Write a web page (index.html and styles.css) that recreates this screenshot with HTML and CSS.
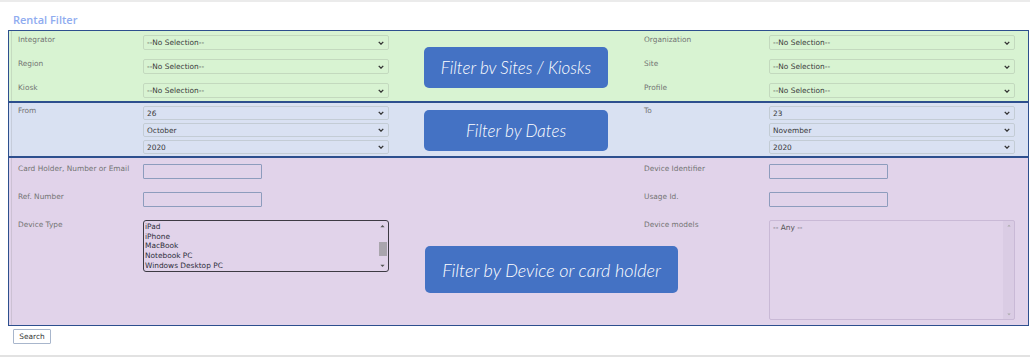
FILE: index.html
```html
<!DOCTYPE html>
<html>
<head>
<meta charset="utf-8">
<link rel="stylesheet" href="styles.css">
</head>
<body>
<div class="page">
  <h1 class="title">Rental Filter</h1>
  <div class="panel">
    <section class="sec sec-sites">
      <label class="lbl">Integrator</label>
      <div class="sel"><span>--No Selection--</span><svg class="chev" viewBox="0 0 8 5"><path d="M1 1 L4 4 L7 1" /></svg></div>
      <div class="spacer"></div>
      <label class="lbl">Organization</label>
      <div class="sel"><span>--No Selection--</span><svg class="chev" viewBox="0 0 8 5"><path d="M1 1 L4 4 L7 1" /></svg></div>

      <label class="lbl">Region</label>
      <div class="sel"><span>--No Selection--</span><svg class="chev" viewBox="0 0 8 5"><path d="M1 1 L4 4 L7 1" /></svg></div>
      <div class="spacer"></div>
      <label class="lbl">Site</label>
      <div class="sel"><span>--No Selection--</span><svg class="chev" viewBox="0 0 8 5"><path d="M1 1 L4 4 L7 1" /></svg></div>

      <label class="lbl">Kiosk</label>
      <div class="sel"><span>--No Selection--</span><svg class="chev" viewBox="0 0 8 5"><path d="M1 1 L4 4 L7 1" /></svg></div>
      <div class="spacer"></div>
      <label class="lbl">Profile</label>
      <div class="sel"><span>--No Selection--</span><svg class="chev" viewBox="0 0 8 5"><path d="M1 1 L4 4 L7 1" /></svg></div>

      <div class="callout callout-sites">Filter bv Sites / Kiosks</div>
    </section>

    <section class="sec sec-dates">
      <label class="lbl">From</label>
      <div class="stack">
        <div class="sel sel-date"><span>26</span><svg class="chev" viewBox="0 0 8 5"><path d="M1 1 L4 4 L7 1" /></svg></div>
        <div class="sel sel-date"><span>October</span><svg class="chev" viewBox="0 0 8 5"><path d="M1 1 L4 4 L7 1" /></svg></div>
        <div class="sel sel-date"><span>2020</span><svg class="chev" viewBox="0 0 8 5"><path d="M1 1 L4 4 L7 1" /></svg></div>
      </div>
      <div class="spacer"></div>
      <label class="lbl">To</label>
      <div class="stack">
        <div class="sel sel-date"><span>23</span><svg class="chev" viewBox="0 0 8 5"><path d="M1 1 L4 4 L7 1" /></svg></div>
        <div class="sel sel-date"><span>November</span><svg class="chev" viewBox="0 0 8 5"><path d="M1 1 L4 4 L7 1" /></svg></div>
        <div class="sel sel-date"><span>2020</span><svg class="chev" viewBox="0 0 8 5"><path d="M1 1 L4 4 L7 1" /></svg></div>
      </div>
      <div class="callout callout-dates">Filter by Dates</div>
    </section>

    <section class="sec sec-device">
      <label class="lbl">Card Holder, Number or Email</label>
      <div><div class="inp"></div></div>
      <div class="spacer"></div>
      <label class="lbl">Device Identifier</label>
      <div><div class="inp"></div></div>

      <label class="lbl">Ref. Number</label>
      <div><div class="inp"></div></div>
      <div class="spacer"></div>
      <label class="lbl">Usage Id.</label>
      <div><div class="inp"></div></div>

      <label class="lbl">Device Type</label>
      <div>
        <div class="list list-types">
          <div class="list-items">
            <div>iPad</div>
            <div>iPhone</div>
            <div>MacBook</div>
            <div>Notebook PC</div>
            <div>Windows Desktop PC</div>
          </div>
          <div class="sbar">
            <svg class="arr" viewBox="0 0 6 4"><path d="M0.5 3.5 L3 0.8 L5.5 3.5 Z" /></svg>
            <div class="track"><div class="thumb"></div></div>
            <svg class="arr" viewBox="0 0 6 4"><path d="M0.5 0.5 L3 3.2 L5.5 0.5 Z" /></svg>
          </div>
        </div>
      </div>
      <div class="spacer"></div>
      <label class="lbl">Device models</label>
      <div class="list list-models">
        <div class="list-items"><div>-- Any --</div></div>
        <div class="sbar sbar-light">
          <svg class="arr" viewBox="0 0 6 4"><path d="M0.5 3.5 L3 0.8 L5.5 3.5 Z" /></svg>
          <div class="track"></div>
          <svg class="arr" viewBox="0 0 6 4"><path d="M0.5 0.5 L3 3.2 L5.5 0.5 Z" /></svg>
        </div>
      </div>

      <div class="callout callout-device">Filter by Device or card holder</div>
    </section>
  </div>
  <button class="btn" type="button">Search</button>
</div>
</body>
</html>
```

FILE: styles.css
```css
* { box-sizing: border-box; }
html, body { margin: 0; padding: 0; background: #fff; }
body { width: 1030px; height: 357px; overflow: hidden; }

.page {
  border-top: 2px solid #ebebeb;
  border-bottom: 2px solid #e2e2e2;
  height: 357px;
  padding: 0 0 0 8px;
  font-family: "DejaVu Sans", Verdana, sans-serif;
  font-size: 7.4px;
}

.title {
  margin: 0;
  padding: 11px 0 0 5px;
  height: 28px;
  font-family: "Open Sans", sans-serif;
  font-weight: 600;
  font-size: 11px;
  line-height: 14px;
  color: #8facf0;
}

.panel { width: 1021px; }

.sec {
  position: relative;
  display: grid;
  grid-template-columns: 125px 246px 1fr 125px 246px;
  border: 1px solid #2d4f8e;
  padding: 0 13px 0 9px;
  background-image: linear-gradient(to right, transparent 2px, rgba(110, 110, 110, 0.18) 2px, rgba(110, 110, 110, 0.18) 3px, transparent 3px);
}

.sec-sites {
  background-color: #d8f3d2;
  row-gap: 9px;
  padding-top: 4px;
  padding-bottom: 3px;
}
.sec-dates {
  background-color: #d9e1f2;
  padding-top: 3px;
  padding-bottom: 2px;
}
.sec-device {
  background-color: #e1d3ea;
  row-gap: 13px;
  padding-top: 6px;
  padding-bottom: 5px;
}

.lbl {
  color: #737373;
  line-height: 9px;
  white-space: nowrap;
}

.sel {
  position: relative;
  display: flex;
  align-items: center;
  height: 15px;
  padding-left: 3px;
  border: 1px solid rgba(140, 150, 140, 0.28);
  border-radius: 2px;
  color: #3a3a3a;
}
.sel-date { height: 14px; }
.stack { display: flex; flex-direction: column; gap: 3px; }

.chev {
  position: absolute;
  right: 4px;
  top: 50%;
  width: 6px;
  height: 4px;
  margin-top: -2px;
  fill: none;
  stroke: #333;
  stroke-width: 1.8;
}

.inp {
  width: 119px;
  height: 15px;
  border: 1px solid #8d9cbd;
  border-radius: 1px;
}

.list {
  display: flex;
  border-radius: 2px;
}
.list-types {
  height: 52px;
  border: 1px solid #3d3a44;
  border-radius: 3px;
}
.list-models {
  height: 100px;
  border: 1px solid rgba(140, 120, 160, 0.28);
}
.list-items {
  flex: 1;
  padding: 1px 0 0 1px;
  line-height: 9.7px;
  color: #2e2e3a;
}
.list-models .list-items { padding: 2px 0 0 3px; color: #555; }

.sbar {
  width: 11px;
  display: flex;
  flex-direction: column;
  align-items: center;
  padding: 3px 0;
}
.sbar-light { background: rgba(120, 100, 140, 0.06); }
.arr { width: 5px; height: 4px; fill: #555; flex: none; }
.sbar-light .arr { fill: #aaa; width: 4px; height: 3px; }
.track { flex: 1; width: 8px; position: relative; }
.thumb {
  position: absolute;
  left: 0;
  right: 0;
  top: 14px;
  height: 14px;
  background: #a9a5ad;
}

.callout {
  position: absolute;
  left: 415px;
  width: 184px;
  height: 41px;
  display: flex;
  align-items: center;
  justify-content: center;
  background: #4472c4;
  border-radius: 5px;
  color: #fff;
  font-family: "Lato", "Open Sans", sans-serif;
  font-style: italic;
  font-weight: 300;
  font-size: 17px;
  white-space: nowrap;
}
.callout-sites { top: 16px; }
.callout-dates { top: 7px; }
.callout-device { top: 88px; left: 416px; width: 253px; height: 47px; font-size: 18px; }

.btn {
  display: block;
  margin: 3px 0 0 5px;
  width: 38px;
  height: 15px;
  padding: 0;
  background: #fff;
  border: 1px solid #a8b6cc;
  border-radius: 1px;
  font-family: "DejaVu Sans", Verdana, sans-serif;
  font-size: 7.4px;
  color: #333;
}
```
